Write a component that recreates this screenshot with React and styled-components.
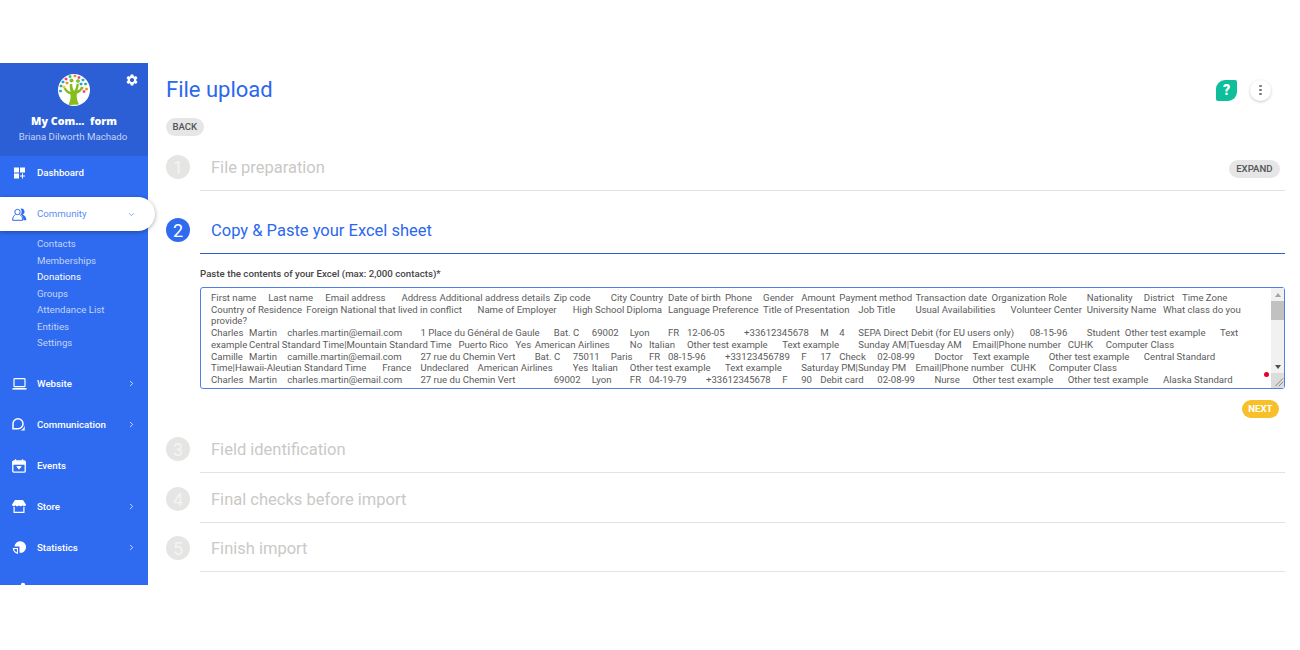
import React from 'react';
import styled, { createGlobalStyle } from 'styled-components';
import { MdSettings } from 'react-icons/md';
import { ChevronDown, ChevronRight } from 'lucide-react';

const GlobalStyle = createGlobalStyle`
  html, body {
    margin: 0;
    padding: 0;
    background: #fff;
  }
  body {
    font-family: Roboto, "Liberation Sans", sans-serif;
  }
`;

const header = [
  'First name', 'Last name', 'Email address', 'Address', 'Additional address details', 'Zip code', '', 'City', 'Country',
  'Date of birth', 'Phone', 'Gender', 'Amount', 'Payment method', 'Transaction date', 'Organization Role', 'Nationality',
  'District', 'Time Zone', 'Country of Residence', 'Foreign National that lived in conflict', 'Name of Employer',
  'High School Diploma', 'Language Preference', 'Title of Presentation', 'Job Title', 'Usual Availabilities',
  'Volunteer Center', 'University Name', 'What class do you provide?',
].join('\t');

const rowA = [
  'Charles', 'Martin', 'charles.martin@email.com', '1 Place du Général de Gaule', 'Bat. C', '69002', 'Lyon', 'FR', '12-06-05',
  '+33612345678', 'M', '4', 'SEPA Direct Debit (for EU users only)', '08-15-96', 'Student', 'Other test example', 'Text example',
  'Central Standard Time|Mountain Standard Time', 'Puerto Rico', 'Yes', 'American Airlines', 'No', 'Italian', 'Other test example',
  'Text example', 'Sunday AM|Tuesday AM', 'Email|Phone number', 'CUHK', 'Computer Class',
].join('\t');

const rowB = [
  'Camille', 'Martin', 'camille.martin@email.com', '27 rue du Chemin Vert', 'Bat. C', '75011', 'Paris', 'FR', '08-15-96',
  '+33123456789', 'F', '17', 'Check', '02-08-99', 'Doctor', 'Text example', 'Other test example',
  'Central Standard Time|Hawaii-Aleutian Standard Time', 'France', 'Undeclared', 'American Airlines', 'Yes', 'Italian',
  'Other test example', 'Text example', 'Saturday PM|Sunday PM', 'Email|Phone number', 'CUHK', 'Computer Class',
].join('\t');

const rowC = [
  'Charles', 'Martin', 'charles.martin@email.com', '27 rue du Chemin Vert', '', '69002', 'Lyon', 'FR', '04-19-79',
  '+33612345678', 'F', '90', 'Debit card', '02-08-99', 'Nurse', 'Other test example', 'Other test example',
  'Alaska Standard Time|Central Standard Time', 'Puerto Rico', 'No', 'American Airlines', 'Yes', 'Italian', 'Other test example',
  'Text example', 'Sunday AM|Tuesday AM', 'Email|Phone number', 'CUHK', 'Computer Class',
].join('\t');

const sheet = [header, rowA, rowB, rowC, rowA, rowB, rowC].join('\n');

const subItems = ['Contacts', 'Memberships', 'Donations', 'Groups', 'Attendance List', 'Entities', 'Settings'];

const DashboardIcon = () => (
  <svg width="14" height="12" viewBox="-2 0 14 12" fill="#fff">
    <rect x="0" y="0.5" width="5" height="5" />
    <rect x="6" y="0.5" width="5" height="5" />
    <rect x="0" y="6.5" width="5" height="5" />
    <path d="M8 6.5h1v2h2v1h-2v2H8v-2H6v-1h2z" />
  </svg>
);

const CommunityIcon = () => (
  <svg width="15" height="13" viewBox="0 0 15 13" fill="none" stroke="#2f6bef" strokeWidth="1">
    <circle cx="5.5" cy="4" r="2.7" />
    <path d="M3.5 6.5C2 7.5.7 8.7.6 12.300h10c0-3.500-1.300-4.800-3-5.800" />
    <path d="M8.500.800a3 3 0 0 1 2 5.700c2 .8 3.900 2.500 3.900 5.800h-3c0-2.700-1-4.500-2.700-5.800 1.300-1.700 1.400-4-.2-5.700z" fill="#2f6bef" stroke="none" />
  </svg>
);

const LaptopIcon = () => (
  <svg width="15" height="12" viewBox="0 0 15 12" fill="none" stroke="#fff" strokeWidth="1.2">
    <rect x="2" y="0.7" width="11" height="8" rx="0.8" />
    <path d="M0.5 10.800h14" strokeWidth="1.6" />
  </svg>
);

const ChatIcon = () => (
  <svg width="14" height="13" viewBox="0 0 14 13" fill="none" stroke="#fff" strokeWidth="1.5">
    <path d="M1 10.800h5a5 5 0 1 0-5-5z" />
    <path d="M12.700 7.500v5H8.500c1.800-.8 3.500-2.500 4.200-5z" fill="#fff" stroke="none" />
  </svg>
);

const CalendarIcon = () => (
  <svg width="14" height="14" viewBox="0 0 14 14" fill="none" stroke="#fff" strokeWidth="1.3">
    <rect x="0.8" y="2" width="12.4" height="11.2" rx="1.2" />
    <path d="M0.8 3h12.400v2H0.8z" fill="#fff" />
    <path d="M3.5 0.3v2.500M10.500 0.3v2.500" />
    <path d="M4.800 7.500h4.400L7 10.200z" fill="#fff" strokeWidth="0.8" />
  </svg>
);

const StoreIcon = () => (
  <svg width="14" height="13" viewBox="0 0 14 13" fill="#fff">
    <path d="M3 0h8l3 4.500c0 1.200-.9 1.700-1.800 1.700-.9 0-1.400-.5-1.700-1-.3.500-1 1-1.800 1S7.300 5.700 7 5.200c-.3.500-.9 1-1.700 1s-1.500-.5-1.800-1c-.3.500-.8 1-1.700 1C.9 6.200 0 5.700 0 4.500z" />
    <path d="M1.500 7v6h11V7h-1.200v4.800H2.700V7z" />
  </svg>
);

const StatsIcon = () => (
  <svg width="14" height="14" viewBox="0 0 14 14" fill="#fff">
    <path d="M2.500 5.500A5.800 5.800 0 1 1 7.500 11.800V5.500z" />
    <path d="M0.800 7h5.200v6a5.800 5.800 0 0 1-5.200-6zm1.200 1.100a4.600 4.600 0 0 0 2.900 3.500V8.100z" fillRule="evenodd" />
  </svg>
);

const LastIcon = () => (
  <svg width="14" height="14" viewBox="0 0 14 14" fill="#fff">
    <circle cx="11" cy="3" r="2.2" />
  </svg>
);

const ResizeHatch = () => (
  <svg width="15" height="15" viewBox="0 0 15 15" fill="none" stroke="#777" strokeWidth="1">
    <path d="M5 14 14 5M9 14l5-5" />
  </svg>
);

const leafColors = ['#1aa7d8', '#e8417f', '#f28c28', '#2bb673', '#f6c21c'];
const leaves = [
  [5, 8, 0], [8, 5, 1], [12, 2.500, 3], [17, 2, 2], [21, 3.500, 1], [25, 6, 0], [27.500, 10, 3], [28.500, 15, 2],
  [26, 17.500, 1], [3, 12, 3], [2.500, 17, 0], [6, 13, 4], [9, 9, 2], [23, 10, 0], [24, 14, 2], [20, 7, 3],
];

const Logo = () => (
  <svg width="32" height="32" viewBox="0 0 32 32">
    <circle cx="16" cy="16" r="16" fill="#fff" />
    {leaves.map(([x, y, c]) => (
      <rect key={`${x}-${y}`} x={x - 1.300} y={y - 1.300} width="2.600" height="2.600" rx="0.600" fill={leafColors[c]} />
    ))}
    <path d="M10.500 31c1.800-4 2.400-7.500 2-10.500-2.800-.8-5.500-2.700-6.800-6l2-.8c1.300 2.200 3 3.500 5 4.200-.8-2.500-1.200-5.200-.8-8l2.300.1c.1 2.500.6 5 1.800 7 1.600-2 2.400-4.600 2.500-7.300l2.300.1c0 2.200-.5 4.500-1.400 6.500 1.400-.5 2.800-1.500 3.900-3.100l1.800 1.100c-1.500 2.600-3.800 4.600-6.300 5.500-.4 3.500.3 7.300 2.200 10.700z" fill="#84bd1c" />
    <circle cx="13.500" cy="6.500" r="2" fill="#84bd1c" />
    <circle cx="20" cy="7" r="1.800" fill="#84bd1c" />
  </svg>
);

const Page = styled.div`
  height: 650px;
  padding: 63px 0 65px;
  box-sizing: border-box;
`;

const Shell = styled.div`
  display: flex;
  height: 522px;
  overflow: hidden;
`;

const Sidebar = styled.aside`
  flex: none;
  width: 148px;
  background: #2f6bf0;
  color: #fff;
`;

const Profile = styled.div`
  position: relative;
  height: 93px;
  box-sizing: border-box;
  padding-top: 11px;
  background: #2c5fd5;
  display: flex;
  flex-direction: column;
  align-items: center;
`;

const GearButton = styled.span`
  position: absolute;
  top: 10px;
  right: 9px;
  display: flex;
  font-size: 14px;
  color: #fff;
`;

const OrgName = styled.div`
  margin-top: 8px;
  font-family: "Open Sans", sans-serif;
  font-size: 10.7px;
  line-height: 14px;
  font-weight: 800;
  white-space: pre;
`;

const UserName = styled.div`
  margin-top: 2px;
  padding-right: 2px;
  font-size: 9.7px;
  line-height: 13px;
  color: #c3d3f7;
`;

const Nav = styled.nav`
  display: flex;
  flex-direction: column;
`;

const NavItem = styled.div`
  display: flex;
  align-items: center;
  flex: none;
  height: 34px;
  margin-top: ${(p) => p.$gap}px;
  padding: 0 12px;
  box-sizing: border-box;
  font-size: 9.7px;
  font-weight: 500;
  color: #fff;
  ${(p) =>
    p.$active &&
    `
    position: relative;
    z-index: 2;
    width: 155px;
    padding-right: 19px;
    background: #fff;
    color: #5b8df3;
    font-weight: 400;
    border-radius: 0 17px 17px 0;
    box-shadow: 0 1px 4px rgba(0, 0, 0, 0.35);
  `}
`;

const IconSlot = styled.span`
  flex: 0 0 25px;
  display: flex;
  align-items: center;
  justify-content: flex-start;
`;

const NavLabel = styled.span`
  flex: 1;
  padding-bottom: 1px;
`;

const SubList = styled.div`
  display: flex;
  flex-direction: column;
  padding: 5px 0 1px 37px;
`;

const SubItem = styled.div`
  height: 16.5px;
  line-height: 16.5px;
  font-size: 9.7px;
  color: ${(p) => (p.$current ? '#fff' : '#c3d3f7')};
`;

const Main = styled.main`
  flex: 1;
  min-width: 0;
  padding: 13px 15px 0 18px;
`;

const TitleRow = styled.div`
  display: flex;
  align-items: center;
  height: 28px;
  padding-right: 14px;
`;

const Title = styled.h1`
  flex: 1;
  margin: 0;
  font-size: 22px;
  line-height: 28px;
  font-weight: 400;
  color: #2b68ee;
`;

const HelpBadge = styled.span`
  width: 21px;
  height: 21px;
  display: flex;
  align-items: center;
  justify-content: center;
  background: #0fbf9b;
  border-radius: 9px 2px 9px 2px;
  color: #fff;
  font-size: 14px;
  font-weight: 900;
`;

const MoreButton = styled.span`
  margin-left: 13px;
  width: 21px;
  height: 21px;
  display: flex;
  flex-direction: column;
  align-items: center;
  justify-content: center;
  gap: 1.5px;
  border-radius: 50%;
  background: #fff;
  box-shadow: 0 1px 3px rgba(0, 0, 0, 0.22);
`;

const Dot = styled.i`
  width: 2.5px;
  height: 2.5px;
  border-radius: 50%;
  background: #777;
`;

const Pill = styled.button`
  height: 18px;
  padding: 0 6.5px 1px;
  border: 0;
  border-radius: 9px;
  background: #e6e6e6;
  color: #555;
  font-family: inherit;
  font-size: 9.6px;
  font-weight: 500;
`;

const ExpandPill = styled(Pill)`
  margin: 3px -1px 0 0;
  padding: 0 7.5px 1px;
`;

const BackRow = styled.div`
  margin: 14px 0 8px;
  display: flex;
`;

const Step = styled.section`
  display: flex;
  gap: 10px;
  margin-top: ${(p) => p.$top}px;
`;

const StepNumber = styled.span`
  flex: 0 0 24px;
  width: 24px;
  height: 24px;
  margin-top: 11px;
  border-radius: 50%;
  display: flex;
  align-items: center;
  justify-content: center;
  font-size: 18px;
  color: ${(p) => (p.$active ? '#fff' : '#f4f4f4')};
  background: ${(p) => (p.$active ? '#2f6bef' : '#e5e5e3')};
`;

const StepBar = styled.div`
  flex: 1;
  height: 47px;
  box-sizing: border-box;
  padding: 0 6px 0 11px;
  display: flex;
  align-items: center;
  justify-content: space-between;
  border-bottom: 1px solid ${(p) => (p.$active ? '#2f5fc8' : '#e2e2e2')};
`;

const StepTitle = styled.h2`
  margin: 0;
  font-size: 16.5px;
  font-weight: 400;
  color: ${(p) => (p.$active ? '#2b68ee' : '#c9c9c7')};
`;

const StepBody = styled.div`
  margin: 0 0 0 34px;
`;

const FieldLabel = styled.label`
  display: block;
  margin: 14px 0 7px;
  font-size: 9.7px;
  line-height: 12px;
  font-weight: 500;
  color: #444;
`;

const SheetWrap = styled.div`
  position: relative;
  height: 102px;
`;

const SheetInput = styled.textarea`
  display: block;
  width: 100%;
  height: 102px;
  box-sizing: border-box;
  margin: 0;
  padding: 4px 34px 0 10px;
  border: 1px solid #4f7fe2;
  border-radius: 3px;
  outline: none;
  font-family: Roboto, sans-serif;
  font-size: 9.6px;
  line-height: 11.72px;
  color: #5c5c5c;
  overflow: hidden;
  resize: none;
`;

const ScrollRail = styled.div`
  position: absolute;
  top: 1px;
  right: 1px;
  bottom: 1px;
  width: 13px;
  display: flex;
  flex-direction: column;
  align-items: stretch;
  background: #f1f1f1;
  pointer-events: none;
`;

const ScrollArrow = styled.span`
  flex: none;
  height: 13px;
  display: flex;
  align-items: center;
  justify-content: center;
  &::before {
    content: '';
    border-left: 3.5px solid transparent;
    border-right: 3.5px solid transparent;
    ${(p) => (p.$up ? 'border-bottom: 4px solid #a3a3a3;' : 'border-top: 4px solid #505050;')}
  }
`;

const ScrollThumb = styled.span`
  flex: none;
  height: 19px;
  background: #c1c1c1;
`;

const ScrollSpace = styled.span`
  flex: 1;
`;

const ScrollCorner = styled.span`
  flex: none;
  height: 15px;
  display: flex;
  background: #dcdcdc;
`;

const RedMark = styled.span`
  position: absolute;
  right: 16px;
  bottom: 12px;
  width: 5px;
  height: 5px;
  border-radius: 50%;
  background: #e8002d;
`;

const ActionRow = styled.div`
  display: flex;
  justify-content: flex-end;
  padding: 11px 6px 0 0;
`;

const NextButton = styled(Pill)`
  background: #f7c02b;
  color: #fff;
  font-weight: 700;
`;

const navAfter = [
  { label: 'Website', icon: <LaptopIcon />, more: true, gap: 14 },
  { label: 'Communication', icon: <ChatIcon />, more: true, gap: 7 },
  { label: 'Events', icon: <CalendarIcon />, gap: 7 },
  { label: 'Store', icon: <StoreIcon />, more: true, gap: 7 },
  { label: 'Statistics', icon: <StatsIcon />, more: true, gap: 7 },
  { label: '', icon: <LastIcon />, gap: 7 },
];

const steps = [
  { n: 3, title: 'Field identification', top: 8 },
  { n: 4, title: 'Final checks before import', top: 3 },
  { n: 5, title: 'Finish import', top: 2 },
];

const App = () => (
  <Page>
    <GlobalStyle />
    <Shell>
      <Sidebar>
        <Profile>
          <Logo />
          <GearButton>
            <MdSettings />
          </GearButton>
          <OrgName>My Com...  form</OrgName>
          <UserName>Briana Dilworth Machado</UserName>
        </Profile>
        <Nav>
          <NavItem $gap={0}>
            <IconSlot>
              <DashboardIcon />
            </IconSlot>
            <NavLabel>Dashboard</NavLabel>
          </NavItem>
          <NavItem $active $gap={7}>
            <IconSlot>
              <CommunityIcon />
            </IconSlot>
            <NavLabel>Community</NavLabel>
            <ChevronDown size={9} />
          </NavItem>
          <SubList>
            {subItems.map((s) => (
              <SubItem key={s} $current={s === 'Donations'}>
                {s}
              </SubItem>
            ))}
          </SubList>
          {navAfter.map((item) => (
            <NavItem key={item.label || 'last'} $gap={item.gap}>
              <IconSlot>{item.icon}</IconSlot>
              <NavLabel>{item.label}</NavLabel>
              {item.more && <ChevronRight size={9} />}
            </NavItem>
          ))}
        </Nav>
      </Sidebar>
      <Main>
        <TitleRow>
          <Title>File upload</Title>
          <HelpBadge>?</HelpBadge>
          <MoreButton>
            <Dot />
            <Dot />
            <Dot />
          </MoreButton>
        </TitleRow>
        <BackRow>
          <Pill>BACK</Pill>
        </BackRow>
        <Step $top={0}>
          <StepNumber>1</StepNumber>
          <StepBar>
            <StepTitle>File preparation</StepTitle>
            <ExpandPill>EXPAND</ExpandPill>
          </StepBar>
        </Step>
        <Step $top={16}>
          <StepNumber $active>2</StepNumber>
          <StepBar $active>
            <StepTitle $active>Copy &amp; Paste your Excel sheet</StepTitle>
          </StepBar>
        </Step>
        <StepBody>
          <FieldLabel>Paste the contents of your Excel (max: 2,000 contacts)*</FieldLabel>
          <SheetWrap>
            <SheetInput readOnly value={sheet} spellCheck={false} />
            <ScrollRail>
              <ScrollArrow $up />
              <ScrollThumb />
              <ScrollSpace />
              <ScrollArrow />
              <ScrollCorner>
                <ResizeHatch />
              </ScrollCorner>
            </ScrollRail>
            <RedMark />
          </SheetWrap>
          <ActionRow>
            <NextButton>NEXT</NextButton>
          </ActionRow>
        </StepBody>
        {steps.map((s) => (
          <Step key={s.n} $top={s.top}>
            <StepNumber>{s.n}</StepNumber>
            <StepBar>
              <StepTitle>{s.title}</StepTitle>
            </StepBar>
          </Step>
        ))}
      </Main>
    </Shell>
  </Page>
);

export default App;
